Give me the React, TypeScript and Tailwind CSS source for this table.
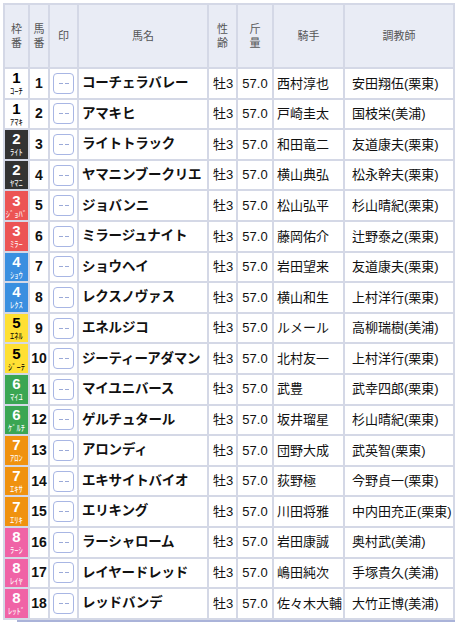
import React from 'react';

type Horse = {
  waku: number;
  umaban: number;
  name: string;
  short: string;
  jockey: string;
  trainer: string;
};

const horses: Horse[] = [
  { waku: 1, umaban: 1, name: 'コーチェラバレー', short: 'ｺｰﾁ', jockey: '西村淳也', trainer: '安田翔伍(栗東)' },
  { waku: 1, umaban: 2, name: 'アマキヒ', short: 'ｱﾏｷ', jockey: '戸崎圭太', trainer: '国枝栄(美浦)' },
  { waku: 2, umaban: 3, name: 'ライトトラック', short: 'ﾗｲﾄ', jockey: '和田竜二', trainer: '友道康夫(栗東)' },
  { waku: 2, umaban: 4, name: 'ヤマニンブークリエ', short: 'ﾔﾏﾆ', jockey: '横山典弘', trainer: '松永幹夫(栗東)' },
  { waku: 3, umaban: 5, name: 'ジョバンニ', short: 'ｼﾞｮﾊﾞ', jockey: '松山弘平', trainer: '杉山晴紀(栗東)' },
  { waku: 3, umaban: 6, name: 'ミラージュナイト', short: 'ﾐﾗｰ', jockey: '藤岡佑介', trainer: '辻野泰之(栗東)' },
  { waku: 4, umaban: 7, name: 'ショウヘイ', short: 'ｼｮｳ', jockey: '岩田望来', trainer: '友道康夫(栗東)' },
  { waku: 4, umaban: 8, name: 'レクスノヴァス', short: 'ﾚｸｽ', jockey: '横山和生', trainer: '上村洋行(栗東)' },
  { waku: 5, umaban: 9, name: 'エネルジコ', short: 'ｴﾈﾙ', jockey: 'ルメール', trainer: '高柳瑞樹(美浦)' },
  { waku: 5, umaban: 10, name: 'ジーティーアダマン', short: 'ｼﾞｰﾃ', jockey: '北村友一', trainer: '上村洋行(栗東)' },
  { waku: 6, umaban: 11, name: 'マイユニバース', short: 'ﾏｲﾕ', jockey: '武豊', trainer: '武幸四郎(栗東)' },
  { waku: 6, umaban: 12, name: 'ゲルチュタール', short: 'ｹﾞﾙﾁ', jockey: '坂井瑠星', trainer: '杉山晴紀(栗東)' },
  { waku: 7, umaban: 13, name: 'アロンディ', short: 'ｱﾛﾝ', jockey: '団野大成', trainer: '武英智(栗東)' },
  { waku: 7, umaban: 14, name: 'エキサイトバイオ', short: 'ｴｷｻ', jockey: '荻野極', trainer: '今野貞一(栗東)' },
  { waku: 7, umaban: 15, name: 'エリキング', short: 'ｴﾘｷ', jockey: '川田将雅', trainer: '中内田充正(栗東)' },
  { waku: 8, umaban: 16, name: 'ラーシャローム', short: 'ﾗｰｼ', jockey: '岩田康誠', trainer: '奥村武(美浦)' },
  { waku: 8, umaban: 17, name: 'レイヤードレッド', short: 'ﾚｲﾔ', jockey: '嶋田純次', trainer: '手塚貴久(美浦)' },
  { waku: 8, umaban: 18, name: 'レッドバンデ', short: 'ﾚｯﾄﾞ', jockey: '佐々木大輔', trainer: '大竹正博(美浦)' },
];

// 枠ごとの色
const wakuStyle: Record<number, string> = {
  1: 'bg-white text-black',
  2: 'bg-[#333333] text-white',
  3: 'bg-[#ec5454] text-white',
  4: 'bg-[#3a8fe0] text-white',
  5: 'bg-[#ffe033] text-black',
  6: 'bg-[#3aa653] text-white',
  7: 'bg-[#f0920f] text-white',
  8: 'bg-[#f063a6] text-white',
};

const Stack = ({ a, b }: { a: string; b: string }) => (
  <div className="flex flex-col items-center leading-[14px]">
    <span>{a}</span>
    <span>{b}</span>
  </div>
);

export default function App() {
  return (
    <div
      className="min-h-screen bg-white pt-[3px] pl-[3px]"
      style={{ fontFamily: '"Liberation Sans", "Noto Sans CJK JP", sans-serif' }}
    >
      <table className="table-fixed w-[452px] border-separate border-spacing-[2px] bg-[#d4d8e6]">
        <colgroup>
          <col className="w-[23px]" />
          <col className="w-[18px]" />
          <col className="w-[27px]" />
          <col className="w-[128px]" />
          <col className="w-[27px]" />
          <col className="w-[34px]" />
          <col className="w-[69px]" />
          <col className="w-[108px]" />
        </colgroup>
        <thead>
          <tr className="h-[62px] text-[11px] text-[#555] bg-[#e9ecf5]">
            <th className="font-normal p-0"><Stack a="枠" b="番" /></th>
            <th className="font-normal p-0"><Stack a="馬" b="番" /></th>
            <th className="font-normal p-0">印</th>
            <th className="font-normal p-0">馬名</th>
            <th className="font-normal p-0"><Stack a="性" b="齢" /></th>
            <th className="font-normal p-0"><Stack a="斤" b="量" /></th>
            <th className="font-normal p-0">騎手</th>
            <th className="font-normal p-0">調教師</th>
          </tr>
        </thead>
        <tbody>
          {horses.map(h => (
            <tr key={h.umaban} className="h-[28.6px] bg-white text-[13px] text-[#111]">
              <td className={`p-0 ${wakuStyle[h.waku]}`}>
                <div className="flex flex-col items-center">
                  <span className="text-[15px] font-bold leading-[16px]">{h.waku}</span>
                  <span className="text-[8.5px] leading-[10px] whitespace-nowrap">{h.short}</span>
                </div>
              </td>
              <td className="p-0 text-center text-[14px] font-bold">{h.umaban}</td>
              <td className="p-0">
                <div className="mx-auto w-[21px] h-[21px] rounded-[4px] border border-[#a8b6e4] flex items-center justify-center gap-[2px]">
                  <span className="w-[4px] h-[1px] bg-[#9aa9d8]" />
                  <span className="w-[4px] h-[1px] bg-[#9aa9d8]" />
                </div>
              </td>
              <td className="p-0 pl-[3px] text-[13.5px] font-bold whitespace-nowrap tracking-[-0.2px]">{h.name}</td>
              <td className="p-0 pl-[4px]">牡3</td>
              <td className="p-0 text-center">57.0</td>
              <td className="p-0 pl-[3px] whitespace-nowrap">{h.jockey}</td>
              <td className="p-0 pl-[7px] whitespace-nowrap">{h.trainer}</td>
            </tr>
          ))}
        </tbody>
      </table>
      <div className="ml-[14px] h-[2px] bg-[#aab3d9]" />
    </div>
  );
}
